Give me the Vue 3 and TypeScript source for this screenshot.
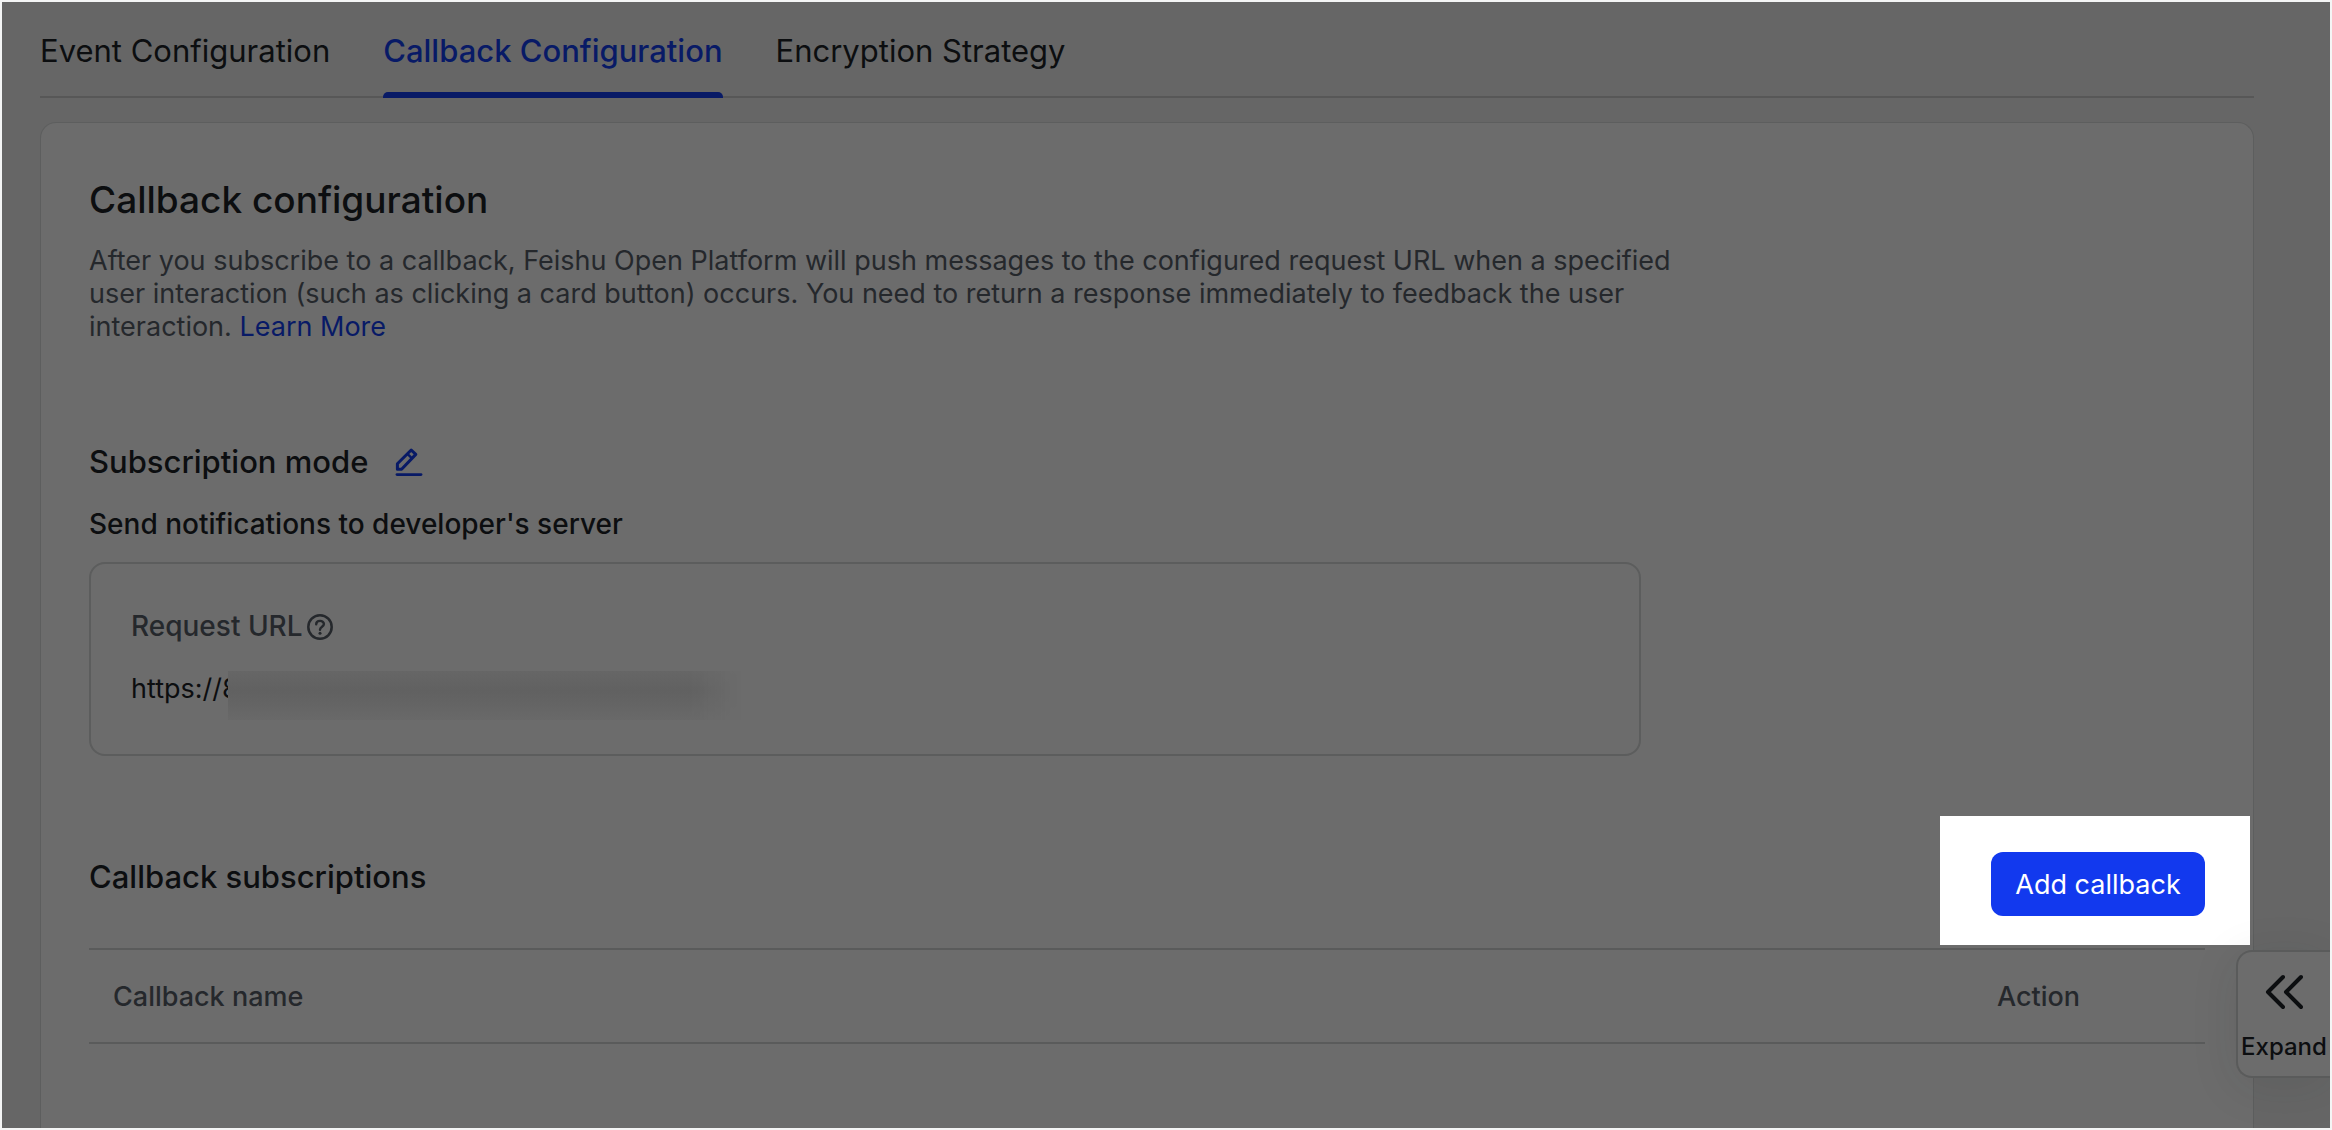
<script setup lang="ts">
import { ref } from 'vue'

const tabs: string[] = ['Event Configuration', 'Callback Configuration', 'Encryption Strategy']
const activeTab = ref(1)
</script>

<template>
  <div class="page">
    <main class="screen">
      <nav class="tabs" role="tablist">
        <button
          v-for="(tab, i) in tabs"
          :key="tab"
          type="button"
          role="tab"
          class="tab"
          :class="{ active: i === activeTab }"
          :aria-selected="i === activeTab"
          @click="activeTab = i"
        >
          {{ tab }}
        </button>
      </nav>

      <section class="card">
        <h1 class="title">Callback configuration</h1>
        <p class="description">
          After you subscribe to a callback, Feishu Open Platform will push messages to the configured request URL when a specified user interaction (such as clicking a card button) occurs. You need to return a response immediately to feedback the user interaction. <a href="#learn-more">Learn More</a>
        </p>

        <div class="mode-heading">
          <h2 class="subtitle">Subscription mode</h2>
          <button type="button" class="edit" aria-label="Edit subscription mode">
            <svg width="28" height="30" viewBox="0 0 28 30" fill="none" stroke="currentColor">
              <path d="M2.4 22.2V16.8L16.2 3L20.8 7.4L6.6 22.2Z" stroke-width="3" stroke-linejoin="round" />
              <path d="M12.4 6.8L17 11.4" stroke-width="2.4" />
              <path d="M2 27.6H26" stroke-width="2.8" stroke-linecap="round" />
            </svg>
          </button>
        </div>
        <h3 class="mode">Send notifications to developer's server</h3>

        <div class="url-box">
          <div class="url-label">
            <span>Request URL</span>
            <svg width="26" height="26" viewBox="0 0 26 26" fill="none" stroke="currentColor">
              <circle cx="13" cy="13" r="11.7" stroke-width="2.5" />
              <path d="M9.2 10.2C9.2 5.8 16.9 5.8 16.9 10.1C16.9 12.8 13 12.8 13 15.8" stroke-width="2.4" stroke-linecap="round" />
              <circle cx="13" cy="19.2" r="1.5" fill="currentColor" stroke="none" />
            </svg>
          </div>
          <div class="url-value">
            <span class="url-text">https://8</span>
            <span class="redacted" aria-hidden="true"></span>
          </div>
        </div>

        <div class="list-heading">
          <h2 class="subtitle">Callback subscriptions</h2>
          <div class="spotlight">
            <button type="button" class="add">Add callback</button>
          </div>
        </div>

        <table class="callbacks">
          <thead>
            <tr>
              <th scope="col">Callback name</th>
              <th scope="col" class="action">Action</th>
            </tr>
          </thead>
        </table>
      </section>

      <button type="button" class="expand">
        <svg width="38" height="36" viewBox="0 0 38 36" fill="none" stroke="currentColor" stroke-width="4" stroke-linecap="round" stroke-linejoin="round">
          <path d="M18 3L3 18L18 33M36 3L21 18L36 33" />
        </svg>
        <span>Expand</span>
      </button>
    </main>
  </div>
</template>

<style>
body {
  margin: 0;
  background: #ffffff;
}
</style>

<style scoped>
* {
  box-sizing: border-box;
}

.page {
  min-height: 100vh;
  padding: 2px;
  display: flex;
  background: #f4f5f5;
  color: #0c0e10;
  font-family: Inter, "Liberation Sans", sans-serif;
  font-size: 27px;
  line-height: 33px;
}

.screen {
  position: relative;
  flex: 1;
  min-width: 0;
  padding: 0 76px 0 38px;
  display: flex;
  flex-direction: column;
  overflow: hidden;
  background: #666666;
}

button {
  padding: 0;
  border: 0;
  background: none;
  color: inherit;
  font: inherit;
  cursor: pointer;
}

h1,
h2,
h3,
p {
  margin: 0;
  font-weight: 500;
}

.tabs {
  height: 96px;
  display: flex;
  gap: 53px;
  border-bottom: 2px solid #575757;
}

.tab {
  height: 96px;
  padding-top: 2px;
  font-size: 31px;
  line-height: 40px;
  white-space: nowrap;
}

.tab.active {
  position: relative;
  color: #081a66;
  font-weight: 500;
}

.tab.active::after {
  content: "";
  position: absolute;
  left: 0;
  right: 0;
  bottom: 0;
  height: 6px;
  border-radius: 5px 5px 0 0;
  background: #081a66;
}

.card {
  flex: 1;
  margin-top: 24px;
  padding: 50px 48px 0;
  border: 1px solid #5d5e5e;
  border-bottom: 0;
  border-radius: 16px 16px 0 0;
  background: #6c6c6c;
}

.title {
  font-size: 37px;
  line-height: 54px;
}

.description {
  max-width: 1610px;
  margin-top: 17px;
  color: #25282c;
  font-weight: 400;
}

.description a {
  color: #081a66;
  text-decoration: none;
}

.mode-heading {
  margin-top: 99px;
  display: flex;
  align-items: center;
  gap: 27px;
}

.subtitle {
  font-size: 31px;
  line-height: 40px;
}

.edit {
  height: 30px;
  color: #081a66;
}

.edit svg,
.url-label svg,
.expand svg {
  display: block;
}

.mode {
  margin-top: 26px;
  font-size: 28px;
}

.url-box {
  max-width: 1552px;
  height: 194px;
  margin-top: 21px;
  padding: 46px 40px 0;
  border: 2px solid #5c5d5d;
  border-radius: 16px;
}

.url-label {
  display: flex;
  align-items: center;
  gap: 4px;
  color: #25282c;
  font-size: 28px;
  font-weight: 500;
}

.url-value {
  margin-top: 28px;
  display: flex;
}

.url-text {
  width: 97px;
  padding-top: 1px;
  overflow: hidden;
}

.redacted {
  width: 524px;
  height: 49px;
  background: linear-gradient(#666666, #616161 40%, #646464 65%, #696969);
  mask-image: linear-gradient(90deg, #000000 88%, transparent 98%);
}

.list-heading {
  margin-top: 60px;
  display: flex;
  align-items: flex-start;
  justify-content: space-between;
}

.list-heading .subtitle {
  margin-top: 41px;
}

.spotlight {
  margin-right: -45px;
  padding: 36px 45px 29px 51px;
  background: #ffffff;
}

.add {
  display: block;
  min-width: 214px;
  height: 64px;
  padding: 0 24px;
  border-radius: 12px;
  background: #1239ee;
  color: #ffffff;
}

.callbacks {
  width: 100%;
  margin-top: 3px;
  border-collapse: separate;
  border-spacing: 0;
  border-top: 2px solid #5a5b5b;
  border-bottom: 2px solid #5a5b5b;
  color: #25282c;
}

.callbacks th {
  height: 92px;
  padding: 0 24px;
  font-weight: 500;
  text-align: left;
}

.callbacks .action {
  width: 232px;
}

.expand {
  position: absolute;
  top: 948px;
  right: 0;
  width: 94px;
  height: 128px;
  display: flex;
  flex-direction: column;
  align-items: center;
  padding-top: 22px;
  gap: 20px;
  border: 2px solid #5a5b5b;
  border-right: 0;
  border-radius: 16px 0 0 16px;
  background: #6c6c6c;
  box-shadow: 0 8px 48px rgba(31, 35, 41, 0.1);
  color: #0c0e10;
  font-size: 24px;
  font-weight: 500;
}
</style>
